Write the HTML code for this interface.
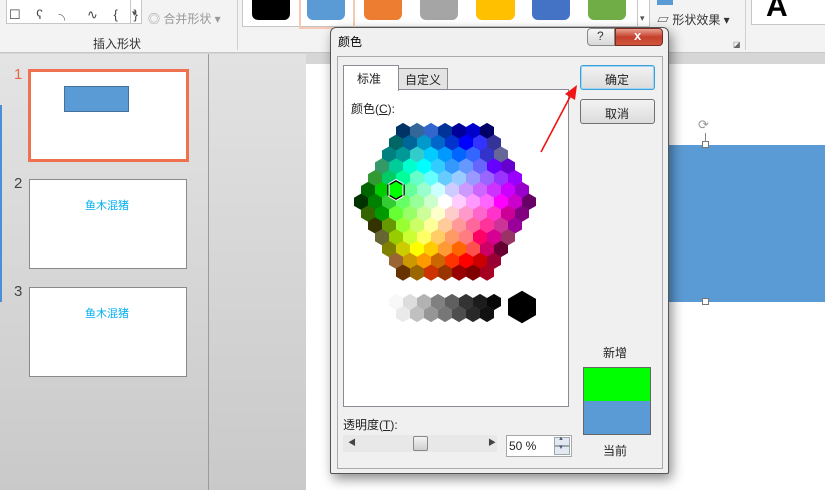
<!DOCTYPE html>
<html><head><meta charset="utf-8">
<style>
*{margin:0;padding:0;box-sizing:border-box}
body{width:825px;height:490px;overflow:hidden;position:relative;font-family:"Liberation Sans","Noto Sans CJK SC",sans-serif;font-size:12px;color:#222;background:#d6d6d6}
.a{position:absolute}
.t{position:absolute;white-space:nowrap}
</style></head><body>
<!-- ribbon -->
<div class="a" style="left:0;top:0;width:825px;height:53px;background:#f3f3f3;border-bottom:1px solid #c6c6c6"></div>
<div class="a" style="left:6px;top:0;width:125px;height:24px;background:#fff;border:1px solid #c6c6c6;border-top:none"></div>
<div class="a" style="left:130px;top:0;width:12px;height:24px;background:#fff;border:1px solid #c6c6c6;border-top:none"></div>
<div class="t" style="left:9px;top:4px;font-size:13px;color:#444;letter-spacing:6px">☐ ʕ ╮ ∿ { }</div>
<div class="t" style="left:132px;top:8px;font-size:9px;color:#555">▾</div>
<div class="t" style="left:148px;top:10px;font-size:12px;color:#999">◎ 合并形状 ▾</div>
<div class="t" style="left:93px;top:35px;font-size:12px;color:#333">插入形状</div>
<div class="a" style="left:237px;top:0;width:1px;height:50px;background:#d0d0d0"></div>
<div class="a" style="left:242px;top:0;width:396px;height:27px;background:#fff;border:1px solid #c6c6c6;border-top:none"></div>
<div class="a" style="left:252px;top:0;width:38px;height:20px;background:#000;border-radius:0 0 6px 6px"></div>
<div class="a" style="left:299px;top:0;width:56px;height:29px;border:2px solid #f7c9b5;border-top:none"></div>
<div class="a" style="left:307px;top:0;width:38px;height:20px;background:#5b9bd5;border-radius:0 0 6px 6px"></div>
<div class="a" style="left:364px;top:0;width:38px;height:20px;background:#ed7d31;border-radius:0 0 6px 6px"></div>
<div class="a" style="left:420px;top:0;width:38px;height:20px;background:#a5a5a5;border-radius:0 0 6px 6px"></div>
<div class="a" style="left:476px;top:0;width:39px;height:20px;background:#ffc000;border-radius:0 0 6px 6px"></div>
<div class="a" style="left:532px;top:0;width:38px;height:20px;background:#4472c4;border-radius:0 0 6px 6px"></div>
<div class="a" style="left:588px;top:0;width:38px;height:20px;background:#70ad47;border-radius:0 0 6px 6px"></div>
<div class="a" style="left:637px;top:0;width:13px;height:27px;background:#fff;border:1px solid #c6c6c6;border-top:none"></div>
<div class="t" style="left:640px;top:13px;font-size:9px;color:#555">▾</div>
<div class="a" style="left:657px;top:0;width:16px;height:5px;background:#5b9bd5"></div>
<div class="t" style="left:657px;top:11px;font-size:12px;color:#333">▱ 形状效果 ▾</div>
<div class="t" style="left:733px;top:40px;font-size:8px;color:#666">◪</div>
<div class="a" style="left:745px;top:0;width:1px;height:50px;background:#d0d0d0"></div>
<div class="a" style="left:751px;top:0;width:80px;height:25px;background:#fff;border:1px solid #c6c6c6;border-top:none"></div>
<div class="t" style="left:766px;top:-10px;font-size:30px;font-weight:bold;color:#000">A</div>
<!-- left panel -->
<div class="a" style="left:0;top:54px;width:208px;height:436px;background:linear-gradient(#e4e4e4,#c9c9c9)"></div>
<div class="a" style="left:0;top:105px;width:2px;height:197px;background:#4a8fd8"></div>
<div class="a" style="left:208px;top:54px;width:1px;height:436px;background:#9a9a9a"></div>
<div class="a" style="left:209px;top:54px;width:97px;height:436px;background:linear-gradient(#e2e2e2,#c9c9c9)"></div>
<div class="t" style="left:14px;top:66px;font-size:15px;color:#e8664a">1</div>
<div class="a" style="left:28px;top:69px;width:161px;height:93px;background:#fff;border:3px solid #f0714f"></div>
<div class="a" style="left:64px;top:86px;width:65px;height:26px;background:#5b9bd5;border:1px solid #41719c"></div>
<div class="t" style="left:14px;top:175px;font-size:15px;color:#444">2</div>
<div class="a" style="left:29px;top:179px;width:158px;height:90px;background:#fff;border:1px solid #8a8a8a"></div>
<div class="t" style="left:85px;top:197px;font-size:11px;color:#00b0f0">鱼木混猪</div>
<div class="t" style="left:14px;top:283px;font-size:15px;color:#444">3</div>
<div class="a" style="left:29px;top:287px;width:158px;height:90px;background:#fff;border:1px solid #8a8a8a"></div>
<div class="t" style="left:85px;top:305px;font-size:11px;color:#00b0f0">鱼木混猪</div>
<!-- slide -->
<div class="a" style="left:306px;top:64px;width:519px;height:426px;background:#fff"></div>
<div class="a" style="left:664px;top:145px;width:161px;height:157px;background:#5b9bd5"></div>
<div class="a" style="left:702px;top:141px;width:7px;height:7px;background:#fff;border:1px solid #777"></div>
<div class="a" style="left:702px;top:298px;width:7px;height:7px;background:#fff;border:1px solid #777"></div>
<div class="a" style="left:705px;top:133px;width:1px;height:9px;background:#888"></div>
<div class="t" style="left:698px;top:117px;font-size:13px;color:#999">⟳</div>
<!-- dialog -->
<div class="a" style="left:330px;top:27px;width:339px;height:447px;background:#f0f0f0;border:1px solid #555;border-radius:6px 6px 2px 2px;box-shadow:3px 5px 12px rgba(0,0,0,.45)"></div>
<div class="t" style="left:338px;top:33px;font-size:12px;color:#000">颜色</div>
<div class="a" style="left:587px;top:28px;width:28px;height:18px;background:linear-gradient(#f7f7f7,#d8d8d8);border:1px solid #888;border-radius:4px 0 0 4px"></div>
<div class="t" style="left:597px;top:29px;font-size:12px;color:#333">?</div>
<div class="a" style="left:615px;top:28px;width:48px;height:18px;background:linear-gradient(#e9a093,#c5402a 50%,#d0553e);border:1px solid #7a2a20;border-radius:0 4px 4px 0"></div>
<div class="t" style="left:634px;top:28px;font-size:13px;font-weight:bold;color:#fff">x</div>
<div class="a" style="left:337px;top:56px;width:326px;height:413px;border:1px solid #aaa;background:#f0f0f0"></div>
<div class="a" style="left:398px;top:68px;width:50px;height:22px;background:#e3e3e3;border:1px solid #8e8f8f;border-bottom:none"></div>
<div class="t" style="left:405px;top:71px;font-size:12px">自定义</div>
<div class="a" style="left:343px;top:89px;width:226px;height:318px;background:#fff;border:1px solid #898c95"></div>
<div class="a" style="left:343px;top:65px;width:56px;height:26px;background:#fff;border:1px solid #898c95;border-bottom:none"></div>
<div class="t" style="left:357px;top:70px;font-size:12px">标准</div>
<div class="t" style="left:351px;top:100px;font-size:12px">颜色(<u>C</u>):</div>
<svg class="a" style="left:0;top:0" width="825" height="490" id="hx"></svg>
<div class="a" style="left:580px;top:65px;width:75px;height:25px;background:linear-gradient(#f2f2f2,#dcdcdc);border:1px solid #3c9fd8;border-radius:3px;box-shadow:inset 0 0 0 1px #9fd6f5"></div>
<div class="t" style="left:605px;top:71px;font-size:12px">确定</div>
<div class="a" style="left:580px;top:99px;width:75px;height:25px;background:linear-gradient(#f2f2f2,#dcdcdc);border:1px solid #707070;border-radius:3px"></div>
<div class="t" style="left:605px;top:105px;font-size:12px">取消</div>
<div class="t" style="left:603px;top:344px;font-size:12px">新增</div>
<div class="a" style="left:583px;top:367px;width:68px;height:68px;border:1px solid #666;background:linear-gradient(#00ff00 50%,#5b9bd5 50%)"></div>
<div class="t" style="left:603px;top:442px;font-size:12px">当前</div>
<div class="t" style="left:343px;top:416px;font-size:12px">透明度(<u>T</u>):</div>
<div class="a" style="left:343px;top:435px;width:154px;height:17px;background:#e8e8e8"></div>
<div class="t" style="left:348px;top:437px;font-size:8px;color:#444">◀</div>
<div class="t" style="left:488px;top:437px;font-size:8px;color:#444">▶</div>
<div class="a" style="left:413px;top:436px;width:15px;height:15px;background:linear-gradient(#f4f4f4,#cfcfcf);border:1px solid #888;border-radius:2px"></div>
<div class="a" style="left:506px;top:435px;width:66px;height:22px;background:#fff;border:1px solid #a8a8a8"></div>
<div class="t" style="left:509px;top:439px;font-size:12px">50 %</div>
<div class="a" style="left:554px;top:437px;width:16px;height:9px;background:#e4e8f0;border:1px solid #9aa"></div>
<div class="a" style="left:554px;top:446px;width:16px;height:9px;background:#e4e8f0;border:1px solid #9aa"></div>
<div class="t" style="left:558px;top:436px;font-size:6px;color:#557">▲</div>
<div class="t" style="left:558px;top:445px;font-size:6px;color:#557">▼</div>
<script>
var rows=[
"003366 336699 3366CC 003399 000099 0000CC 000066",
"006666 006699 0099CC 0066CC 0033CC 0000FF 3333FF 333399",
"008080 009999 33CCCC 00CCFF 0099FF 0066FF 3366FF 3333CC 666699",
"339966 00CC99 00FFCC 00FFFF 33CCFF 3399FF 6699FF 6666FF 6600FF 6600CC",
"339933 00CC66 00FF99 66FFCC 66FFFF 66CCFF 99CCFF 9999FF 9966FF 9933FF 9900FF",
"006600 00CC00 00FF00 66FF99 99FFCC CCFFFF CCCCFF CC99FF CC66FF CC33FF CC00FF 9900CC",
"003300 008000 33CC33 66FF66 99FF99 CCFFCC FFFFFF FFCCFF FF99FF FF66FF FF00FF CC00CC 660066",
"336600 009900 66FF33 99FF66 CCFF99 FFFFCC FFCCCC FF99CC FF66CC FF33CC CC0099 800080",
"333300 669900 99FF33 CCFF66 FFFF99 FFCC99 FF9999 FF6699 FF3399 CC3399 990099",
"666633 99CC00 CCFF33 FFFF66 FFCC66 FF9966 FF7C80 FF0066 D60093 993366",
"808000 CCCC00 FFFF00 FFCC00 FF9933 FF6600 FF5050 CC0066 660033",
"996633 CC9900 FF9900 CC6600 FF3300 FF0000 CC0000 990033",
"663300 996600 CC3300 993300 990000 800000 A50021"];
var s="",W=14,H=11.8;
function hex(cx,cy,w,c,st){var h=w/2,v=w*0.58;return '<polygon points="'+(cx)+','+(cy-v)+' '+(cx+h)+','+(cy-v/2)+' '+(cx+h)+','+(cy+v/2)+' '+cx+','+(cy+v)+' '+(cx-h)+','+(cy+v/2)+' '+(cx-h)+','+(cy-v/2)+'" fill="#'+c+'"'+(st||'')+'/>';}
rows.forEach(function(r,i){var cs=r.split(" "),n=cs.length,cy=131+i*H,x0=445-(n-1)*W/2;cs.forEach(function(c,j){s+=hex(x0+j*W,cy,W,c);});});
var g1="F8F8F8 DDDDDD B2B2B2 808080 5F5F5F 333333 1C1C1C 080808".split(" ");
var g2="EAEAEA C0C0C0 969696 777777 4D4D4D 292929 111111".split(" ");
g1.forEach(function(c,j){s+=hex(396+j*W,302,W,c);});
g2.forEach(function(c,j){s+=hex(403+j*W,314,W,c);});
s+=hex(522,307,28,"000000");
s+=hex(396,190,16,"00FF00",' stroke="#000" stroke-width="1.5"');
s+='<polygon points="396,179.5 403,183.5 403,196.5 396,200.5 389,196.5 389,183.5" fill="none" stroke="#fff" stroke-width="1"/>';
s+='<line x1="541" y1="152" x2="571" y2="95" stroke="#f01414" stroke-width="1.6"/><polygon points="577,85 575,100 565,94" fill="#f01414"/>';
document.getElementById("hx").innerHTML=s;
</script>
</body></html>
